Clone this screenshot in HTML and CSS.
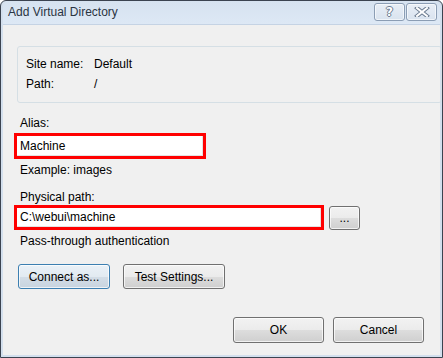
FILE: index.html
```html
<!DOCTYPE html>
<html lang="en">
<head>
    <meta charset="UTF-8">
    <meta name="viewport" content="width=device-width, initial-scale=1.0">
    <title>Add Virtual Directory</title>
    <link rel="stylesheet" href="styles.css">
</head>
<body>
    <div class="dialog">
        <div class="title-bar">
            <span class="title-text">Add Virtual Directory</span>
            <div class="caption-buttons">
                <button class="caption-btn help-btn"><span class="help-glyph">?</span></button>
                <button class="caption-btn close-btn">
                    <svg width="16" height="10" viewBox="0 0 16 10">
                        <path d="M3 1 L13 9 M13 1 L3 9" stroke="#6b7b90" stroke-width="4" stroke-linecap="square"/>
                        <path d="M3 1 L13 9 M13 1 L3 9" stroke="#ffffff" stroke-width="2" stroke-linecap="square"/>
                    </svg>
                </button>
            </div>
        </div>

        <div class="dialog-body">
            <!-- site info -->
            <div class="info-box">
                <div class="info-row">
                    <span class="info-label">Site name:</span>
                    <span>Default</span>
                </div>
                <div class="info-row">
                    <span class="info-label">Path:</span>
                    <span>/</span>
                </div>
            </div>

            <label class="field-label alias-label">Alias:</label>
            <div class="text-input alias-input">Machine</div>
            <p class="hint">Example: images</p>

            <label class="field-label path-label">Physical path:</label>
            <div class="path-row">
                <div class="text-input path-input">C:\webui\machine</div>
                <button class="win-btn browse-btn">...</button>
            </div>
            <p class="hint">Pass-through authentication</p>

            <div class="auth-buttons">
                <button class="win-btn default-btn connect-btn">Connect as...</button>
                <button class="win-btn test-btn">Test Settings...</button>
            </div>

            <div class="footer">
                <button class="win-btn footer-btn">OK</button>
                <button class="win-btn footer-btn">Cancel</button>
            </div>
        </div>
    </div>
</body>
</html>
```

FILE: styles.css
```css
body {
    margin: 0;
    font-family: "Segoe UI", "Liberation Sans", Arial, sans-serif;
    font-size: 12px;
    color: #000;
    background: #ffffff;
}

.dialog {
    width: 443px;
    height: 358px;
    box-sizing: border-box;
    border: 1px solid #3b4350;
    border-radius: 6px 6px 0 0;
    background: #d3dfed;
    padding: 0 2px 2px 2px;
    display: flex;
    flex-direction: column;
}

/* title bar */
.title-bar {
    height: 23px;
    display: flex;
    align-items: center;
    justify-content: space-between;
    padding-left: 5px;
    background: linear-gradient(#d6e2f0, #dde8f5);
    border-radius: 5px 5px 0 0;
}

.title-text {
    color: #2a3442;
    font-size: 12px;
    margin-top: -1px;
}

.caption-buttons {
    display: flex;
    gap: 1px;
    margin-right: 3px;
    margin-top: -2px;
}

.caption-btn {
    width: 31px;
    height: 18px;
    border: 1px solid #8b9db4;
    border-radius: 3px;
    background: linear-gradient(#e8eef6, #d9e3ef);
    padding: 0;
    display: flex;
    align-items: center;
    justify-content: center;
    box-shadow: inset 0 0 0 1px rgba(255,255,255,0.6);
}

.help-glyph {
    font-family: "DejaVu Sans", sans-serif;
    font-weight: bold;
    font-size: 12px;
    color: #ffffff;
    line-height: 12px;
    text-shadow: -1px 0 #6b7b90, 1px 0 #6b7b90, 0 -1px #6b7b90, 0 1px #6b7b90;
}

/* body */
.dialog-body {
    flex: 1;
    background: #f0f0f0;
    border-top: 1px solid #c5d3e4;
    display: flex;
    flex-direction: column;
    padding: 21px 0 12px 11px;
}

.info-box {
    width: 407px;
    margin-left: 3px;
    border: 1px solid #d5dfe5;
    border-radius: 3px;
    padding: 10px 8px;
    display: flex;
    flex-direction: column;
    gap: 5px;
}

.info-row {
    display: flex;
    line-height: 15px;
}

.info-label {
    width: 68px;
}

.field-label {
    display: block;
    line-height: 15px;
    padding-left: 6px;
}

.alias-label {
    margin-top: 13px;
}

.path-label {
    margin-top: 12px;
}

.text-input {
    box-sizing: border-box;
    height: 26px;
    border: 3px solid #ff0000;
    background: #ffffff;
    box-shadow: inset -1px -1px 0 #e3e3e3;
    padding-left: 3px;
    line-height: 20px;
}

.alias-input {
    width: 192px;
    margin-top: 2px;
}

.hint {
    margin: 4px 0 0 0;
    padding-left: 6px;
    line-height: 15px;
}

.path-row {
    display: flex;
    align-items: center;
    gap: 5px;
    margin-top: 0;
}

.path-input {
    width: 310px;
    height: 25px;
    line-height: 19px;
}

/* windows 7 style buttons */
.win-btn {
    font-family: inherit;
    font-size: 12px;
    color: #000;
    border: 1px solid #707070;
    border-radius: 3px;
    background: linear-gradient(#f2f2f2 0%, #ebebeb 50%, #dddddd 51%, #cfcfcf 100%);
    box-shadow: inset 0 0 0 1px rgba(255,255,255,0.7);
    padding: 0;
    cursor: pointer;
}

.browse-btn {
    width: 31px;
    height: 24px;
    line-height: 14px;
}

.auth-buttons {
    display: flex;
    gap: 13px;
    margin-top: 15px;
    margin-left: 4px;
}

.connect-btn {
    width: 92px;
    height: 25px;
}

.default-btn {
    border-color: #3c7fb1;
    background: linear-gradient(#eaf1f7 0%, #e2eaf1 50%, #d3dde7 51%, #c8d4df 100%);
}

.test-btn {
    width: 102px;
    height: 25px;
}

.footer {
    margin-top: auto;
    display: flex;
    justify-content: flex-end;
    gap: 9px;
    padding-right: 16px;
}

.footer-btn {
    width: 91px;
    height: 26px;
}
```
